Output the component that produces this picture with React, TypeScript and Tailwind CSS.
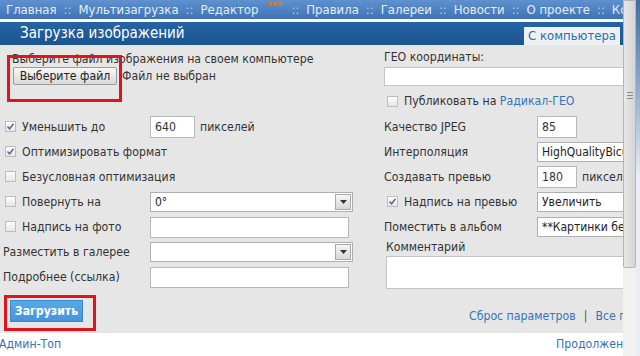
import React from 'react';

const font = "font-['DejaVu_Sans_Condensed','DejaVu_Sans',sans-serif]";

function Check({ checked = false }: { checked?: boolean }) {
  return (
    <span className="inline-flex h-[11px] w-[11px] shrink-0 items-center justify-center border border-[#bdbdbd] bg-gradient-to-b from-[#fdfdfd] to-[#e6e6e6]">
      {checked && (
        <svg width="9" height="9" viewBox="0 0 9 9">
          <path d="M1.5 4.5 L3.6 6.8 L7.5 1.8" fill="none" stroke="#4a6b95" strokeWidth="1.4" />
        </svg>
      )}
    </span>
  );
}

function Input({ value = '', w }: { value?: string; w: string }) {
  return (
    <div className={`${w} flex h-[21px] items-center border border-[#b8b8b8] bg-white px-[4px] text-[12px] text-[#222]`}>
      {value}
    </div>
  );
}

function Select({ value = '', w, arrow = true }: { value?: string; w: string; arrow?: boolean }) {
  return (
    <div className={`${w} flex h-[20px] items-center border border-[#b0b0b0] bg-white text-[12px] text-[#222]`}>
      <span className="flex-1 overflow-hidden whitespace-nowrap pl-[4px]">{value}</span>
      {arrow && (
        <span className="mr-px flex h-[16px] w-[16px] items-center justify-center border border-[#a8a8a8] bg-gradient-to-b from-[#f6f6f6] to-[#d8d8d8]">
          <svg width="7" height="4" viewBox="0 0 7 4">
            <path d="M0 0 H7 L3.5 4 Z" fill="#333" />
          </svg>
        </span>
      )}
    </div>
  );
}

function Row({ children }: { children: React.ReactNode }) {
  return <div className="flex h-[25px] items-center whitespace-nowrap">{children}</div>;
}

export default function App() {
  const nav = ['Главная', 'Мультизагрузка', 'Редактор', 'Правила', 'Галереи', 'Новости', 'О проекте', 'Контакты'];

  return (
    <div className={`flex h-[356px] w-[640px] overflow-hidden bg-white ${font} text-[12.2px] text-[#333]`}>
      <div className="w-[623px] shrink-0 overflow-hidden">
        <div className="w-[720px]">
          {/* top navigation */}
          <div className="flex h-[19px] w-[623px] items-center overflow-hidden whitespace-nowrap bg-gradient-to-b from-[#5f91cf] to-[#3f73b5] pl-[6px] text-[13px] text-[#e4edf8]">
            {nav.map((item, i) => (
              <span key={item} className="flex shrink-0 items-center">
                {i > 0 && <span className="px-[7px] text-[#b9cde6]">::</span>}
                <span className="relative">
                  {item}
                  {item === 'Редактор' && (
                    <span className="absolute top-0 left-[67px] text-[7px] leading-[8px] font-bold text-[#f26b1d]">new</span>
                  )}
                </span>
                {item === 'Редактор' && <span className="w-[26px]" />}
              </span>
            ))}
          </div>
          <div className="h-[3px]" />
          {/* title bar */}
          <div className="flex h-[23px] w-[623px] items-end justify-between bg-gradient-to-b from-[#2564a4] to-[#1b558f]">
            <span className="self-center pl-[20px] text-[15px] text-white">Загрузка изображений</span>
            <span className="mr-[3px] flex h-[18px] items-center bg-[#eef1f4] px-[4px] text-[13px] text-[#2b6cb3]">С компьютера</span>
          </div>

          {/* form panel */}
          <div className="flex h-[288px] bg-[#e6e6e6]">
            <div className="relative w-[384px] shrink-0">
              <div className="h-[69.5px] whitespace-nowrap pl-[12px] pt-[7px]">
                <div className="leading-[14px]">Выберите файл изображения на своем компьютере</div>
                <div className="mt-[1px] flex items-center">
                  <span className="ml-[1px] flex h-[18px] w-[104px] items-center justify-center rounded-[2px] border border-[#9c9c9c] bg-gradient-to-b from-[#f7f7f7] to-[#dadada] text-[#222]">
                    Выберите файл
                  </span>
                  <span className="ml-[5px]">Файл не выбран</span>
                </div>
              </div>
              <div className="pointer-events-none absolute left-[7px] top-[10px] h-[47px] w-[115px] border-[3px] border-[#e3131b]" />

              <Row>
                <span className="ml-[5px] flex w-[145px] items-center gap-[6px]"><Check checked /> Уменьшить до</span>
                <div className="flex h-[22px] w-[45px] items-center border border-[#b8b8b8] bg-white px-[4px]">640</div>
                <span className="ml-[5px]">пикселей</span>
              </Row>
              <Row>
                <span className="ml-[5px] flex items-center gap-[6px]"><Check checked /> Оптимизировать формат</span>
              </Row>
              <Row>
                <span className="ml-[5px] flex items-center gap-[6px]"><Check /> Безусловная оптимизация</span>
              </Row>
              <Row>
                <span className="ml-[5px] flex w-[145px] items-center gap-[6px]"><Check /> Повернуть на</span>
                <Select value="0°" w="w-[203px]" />
              </Row>
              <Row>
                <span className="ml-[5px] flex w-[145px] items-center gap-[6px]"><Check /> Надпись на фото</span>
                <Input w="w-[199px]" />
              </Row>
              <Row>
                <span className="ml-[3px] w-[147px]">Разместить в галерее</span>
                <Select w="w-[203px]" />
              </Row>
              <Row>
                <span className="ml-[3px] w-[147px]">Подробнее (ссылка)</span>
                <Input w="w-[199px]" />
              </Row>

              <div className="ml-[10px] mt-[10.5px] flex h-[22px] w-[73px] items-center justify-center border border-[#3b86c8] bg-gradient-to-b from-[#5aa9ea] to-[#4494dc] font-bold text-white">
                Загрузить
              </div>
              <div className="pointer-events-none absolute left-[4px] top-[250px] h-[36px] w-[92px] border-[3px] border-[#e3131b]" />
            </div>

            <div className="w-[330px] shrink-0">
              <div className="h-[69.5px] whitespace-nowrap pt-[5px]">
                <div className="leading-[14px]">ГЕО координаты:</div>
                <div className="mt-[3px] h-[19px] w-[260px] border border-[#c4c4c4] bg-white" />
                <div className="mt-[6px] flex items-center gap-[6px] pl-[3px]">
                  <Check /> <span>Публиковать на <span className="text-[#3474b8]">Радикал-ГЕО</span></span>
                </div>
              </div>
              <Row>
                <span className="w-[153px]">Качество JPEG</span>
                <div className="flex h-[22px] w-[40px] items-center border border-[#b8b8b8] bg-white px-[4px]">85</div>
              </Row>
              <Row>
                <span className="w-[153px]">Интерполяция</span>
                <Select value="HighQualityBicubic" w="w-[150px]" arrow={false} />
              </Row>
              <Row>
                <span className="w-[153px]">Создавать превью</span>
                <div className="flex h-[22px] w-[40px] items-center border border-[#b8b8b8] bg-white px-[4px]">180</div>
                <span className="ml-[5px]">пикселей</span>
              </Row>
              <Row>
                <span className="flex w-[153px] items-center gap-[6px] pl-[3px]"><Check checked /> Надпись на превью</span>
                <Select value="Увеличить" w="w-[150px]" arrow={false} />
              </Row>
              <Row>
                <span className="w-[153px]">Поместить в альбом</span>
                <Select value="**Картинки без альбома**" w="w-[150px]" arrow={false} />
              </Row>
              <div className="pl-[2px] leading-[14px]">Комментарий</div>
              <div className="ml-[2px] mt-[2px] h-[33px] w-[300px] border border-[#c4c4c4] bg-white" />
              <div className="mt-[18px] flex items-center whitespace-nowrap pl-[85px]">
                <span className="text-[#3474b8]">Сброс параметров</span>
                <span className="px-[8px] text-[#555]">|</span>
                <span className="text-[#3474b8]">Все параметры</span>
              </div>
            </div>
          </div>

          {/* footer links */}
          <div className="flex h-[23px] w-[623px] items-center justify-between whitespace-nowrap">
            <span className="-ml-[1px] text-[#3474b8]">Админ-Топ</span>
            <span className="-mr-[14px] text-[#3474b8]">Продолжение</span>
          </div>
        </div>
      </div>

      {/* scrollbar */}
      <div className="relative h-full w-[13px] shrink-0 bg-[#f1f1f1]">
        <div className="flex h-[268px] w-[13px] items-center justify-center rounded-b-[2px] border border-[#b5b5b5] bg-gradient-to-r from-[#e8e8e8] to-[#d5d5d5]">
          <div className="mt-[-78px] flex flex-col gap-[2px]">
            <span className="block h-px w-[6px] bg-[#8a8a8a]" />
            <span className="block h-px w-[6px] bg-[#8a8a8a]" />
            <span className="block h-px w-[6px] bg-[#8a8a8a]" />
          </div>
        </div>
      </div>
      <div className="h-full w-[4px] bg-gradient-to-b from-[#3e6da3] via-[#e9eef4] to-[#e9eef4]" />
    </div>
  );
}
